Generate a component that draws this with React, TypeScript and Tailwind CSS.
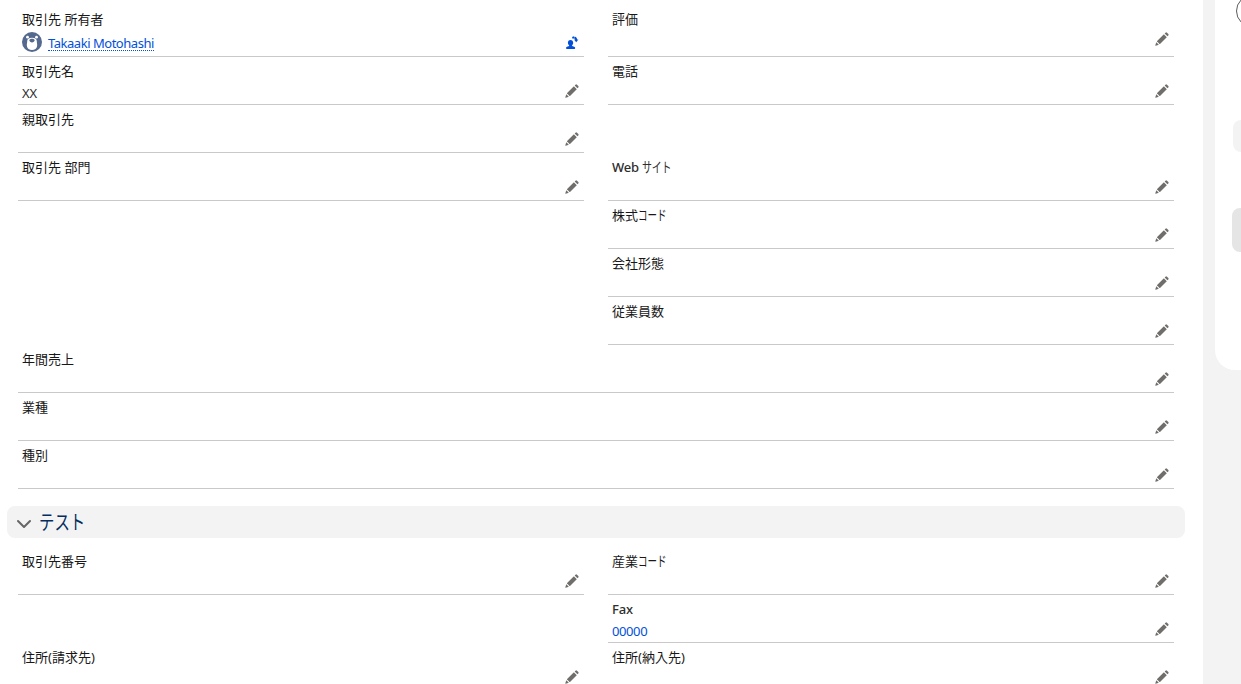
import React from "react";

function EditIcon() {
  return (
    <svg viewBox="0 0 14 14" className="h-3.5 w-3.5 shrink-0" fill="#706e6b">
      <path d="M2.100 9 8.600 2.500a.4.4 0 0 1 .5 0l2.400 2.400a.4.4 0 0 1 0 .5L5 11.900a.4.4 0 0 1-.5 0L2.100 9.500a.4.4 0 0 1 0-.5Z" />
      <path d="m9.900 1.300.6-.6a1.100 1.100 0 0 1 1.500 0l1.300 1.300a1.100 1.100 0 0 1 0 1.500l-.6.6a.4.4 0 0 1-.5 0L9.900 1.800a.4.4 0 0 1 0-.5Z" />
      <path d="M1.300 10.200 3.800 12.700.8 13.700a.4.4 0 0 1-.5-.5Z" />
    </svg>
  );
}

function ChangeOwnerIcon() {
  return (
    <svg viewBox="0 0 14 14" className="h-3.5 w-3.5 shrink-0" fill="#0250d9">
      <path d="M5.500 4c1.700 0 2.700 1.200 2.700 2.800 0 1-.5 1.900-1.100 2.500v.6l2.100.9c.7.3 1 .7 1 1.300 0 .5-.3.900-.8.900H1.900c-.5 0-.9-.4-.9-.9 0-.6.4-1 1-1.300l2.100-.9v-.6C3.400 8.700 2.900 7.800 2.900 6.800 2.900 5.200 3.800 4 5.500 4Z" />
      <path d="M7 .9 9 .3 9.500 2.200 7.600 2.700ZM9.800.6c1.300.4 2.100 1.400 2.300 2.900h1.300l-2.200 2.700L9 3.500h1.300c-.1-.6-.4-.9-.9-1.100Z" />
    </svg>
  );
}

function Avatar() {
  return (
    <svg viewBox="0 0 20 20" className="h-5 w-5 shrink-0">
      <circle cx="10" cy="10" r="10" fill="#54698d" />
      <circle cx="5.500" cy="5.200" r="1.400" fill="#fff" />
      <circle cx="14.500" cy="5.200" r="1.400" fill="#fff" />
      <path d="M10 5.800c3.400 0 4.800 1.200 4.800 3.400 0 1.600.6 2.800.3 4.800-.3 2.500-2.400 4-5.100 4s-4.800-1.500-5.100-4c-.3-2 .3-3.200.3-4.800C5.200 7 6.600 5.800 10 5.800Z" fill="#fff" />
      <path d="M10 6.800c1.500 0 2.700.6 2.700 1.500S11.300 10.400 10 10.400 7.300 9.200 7.300 8.300 8.500 6.800 10 6.800Z" fill="#54698d" />
    </svg>
  );
}

function Kana({ text, box }: { text: string; box: string }) {
  return (
    <span className={`inline-block whitespace-nowrap ${box}`}>
      <span className="inline-block origin-left">{text}</span>
    </span>
  );
}

type FieldProps = {
  label: React.ReactNode;
  children?: React.ReactNode;
  first?: boolean;
  owner?: boolean;
  latin?: boolean;
};

function Field({ label, children, first, owner, latin }: FieldProps) {
  return (
    <div className={`flex flex-col border-b border-[#c9c9c9] px-1 ${first ? "h-[52px]" : "h-12"}`}>
      <div className={`mt-1 h-5 text-[13px] leading-5 whitespace-nowrap ${latin ? "font-medium tracking-[-0.2px] text-[#2e2e2e]" : "text-[#181818]"}`}>{label}</div>
      <div className="flex items-start justify-between">
        <div className={`text-[13px] leading-5 text-[#2e2e2e] ${owner ? "pt-1" : "pt-0.5"}`}>{children}</div>
        <div className={owner ? "pt-[7px] pr-px" : "pt-[3px] pr-px"}>
          {owner ? <ChangeOwnerIcon /> : <EditIcon />}
        </div>
      </div>
    </div>
  );
}

function Blank() {
  return <div className="h-12" />;
}

export default function App() {
  return (
    <div className="flex h-[684px] w-[1241px] overflow-hidden bg-[#f3f3f3] font-['Noto_Sans','Noto_Sans_CJK_JP',sans-serif]">
      <main className="h-[684px] w-[1203px] shrink-0 overflow-hidden bg-white">
        <div className="ml-[18px] grid w-[1156px] grid-cols-2 gap-x-6 pt-[5px]">
          <Field first owner label="取引先 所有者">
            <div className="-mt-px flex h-[22px] items-start gap-1.5">
              <Avatar />
              <a className="mt-px h-[18px] w-[106px] border-b border-dotted border-[#0250d9] leading-5 tracking-[-0.47px] whitespace-nowrap text-[#0250d9]">
                Takaaki Motohashi
              </a>
            </div>
          </Field>
          <Field first label="評価" />
          <Field label="取引先名">XX</Field>
          <Field label="電話" />
          <Field label="親取引先" />
          <Blank />
          <Field label="取引先 部門" />
          <Field latin label={<>Web <Kana text="サイト" box="w-[30px] text-[14px] font-normal *:scale-x-[0.71]" /></>} />
          <Blank />
          <Field label={<>株式<Kana text="コード" box="w-[30px] text-[14px] *:scale-x-[0.68]" /></>} />
          <Blank />
          <Field label="会社形態" />
          <Blank />
          <Field label="従業員数" />
          <div className="col-span-2"><Field label="年間売上" /></div>
          <div className="col-span-2"><Field label="業種" /></div>
          <div className="col-span-2"><Field label="種別" /></div>
        </div>
        <h3 className="mt-[17px] ml-[7px] flex h-8 w-[1178px] items-center rounded-lg bg-[#f3f3f3] pl-2.5 text-[20px] text-[#032d60]">
          <svg viewBox="0 0 14 14" className="mt-1 mr-2 h-3.5 w-3.5" fill="none" stroke="#666" strokeWidth="2" strokeLinecap="round" strokeLinejoin="round">
            <path d="m1 4 6 6 6-6" />
          </svg>
          <Kana text="テスト" box="w-[48px] pt-px *:scale-x-[0.77]" />
        </h3>
        <div className="mt-[9px] ml-[18px] grid w-[1156px] grid-cols-2 gap-x-6">
          <Field label="取引先番号" />
          <Field label={<>産業<Kana text="コード" box="w-[30px] text-[14px] *:scale-x-[0.68]" /></>} />
          <Blank />
          <Field latin label="Fax"><a className="tracking-[-0.4px] text-[#0250d9]">00000</a></Field>
          <Field label="住所(請求先)" />
          <Field label="住所(納入先)" />
        </div>
      </main>
      <aside className="ml-3 h-[370px] w-[26px] overflow-hidden rounded-bl-[20px] bg-white">
        <div className="-mt-[5px] ml-[21px] h-8 w-8 rounded-full border border-[#5c5c5c]" />
        <div className="mt-[93px] ml-[18px] h-8 w-16 rounded-lg bg-[#f3f3f3]" />
        <div className="mt-14 ml-[17px] h-11 w-16 rounded-lg bg-[#e5e5e5]" />
      </aside>
    </div>
  );
}
